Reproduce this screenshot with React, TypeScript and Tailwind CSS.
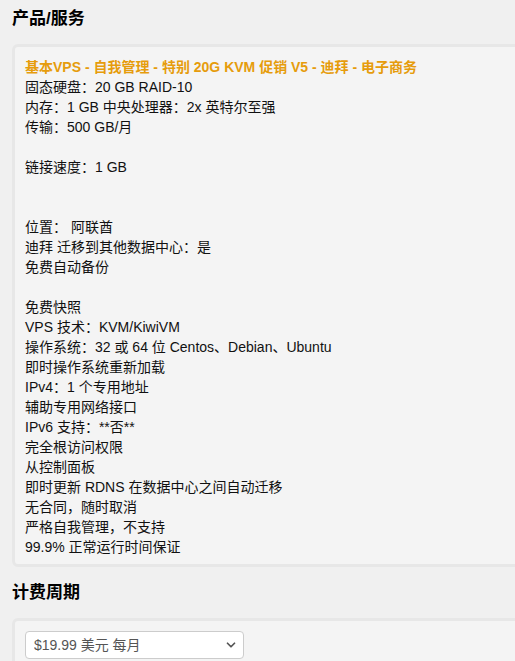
import React from "react";
import { ChevronDown } from "lucide-react";

const features: string[] = [
  "固态硬盘：20 GB RAID-10",
  "内存：1 GB 中央处理器：2x 英特尔至强",
  "传输：500 GB/月",
  "",
  "链接速度：1 GB",
  "",
  "",
  "位置： 阿联酋",
  "迪拜 迁移到其他数据中心：是",
  "免费自动备份",
  "",
  "免费快照",
  "VPS 技术：KVM/KiwiVM",
  "操作系统：32 或 64 位 Centos、Debian、Ubuntu",
  "即时操作系统重新加载",
  "IPv4：1 个专用地址",
  "辅助专用网络接口",
  "IPv6 支持：**否**",
  "完全根访问权限",
  "从控制面板",
  "即时更新 RDNS 在数据中心之间自动迁移",
  "无合同，随时取消",
  "严格自我管理，不支持",
  "99.9% 正常运行时间保证",
];

const App: React.FC = () => {
  return (
    <div
      className="min-h-[661px] w-[515px] overflow-hidden bg-[#f0f0f0] pl-3 text-[14px] text-[#111]"
      style={{ fontFamily: '"Liberation Sans", Arial, "Noto Sans CJK SC", sans-serif' }}
    >
      <h2 className="pt-[7px] text-[17px] font-bold leading-[24px] text-black">产品/服务</h2>

      <div className="-mr-6 mt-[13px] rounded-[6px] border-[3px] border-[#e7e7e7] bg-[#f4f4f4] pb-[7px] pl-[10px] pt-[10px]">
        <div className="font-bold leading-[20px] text-[#e69c0c]">
          基本VPS - 自我管理 - 特别 20G KVM 促销 V5 - 迪拜 - 电子商务
        </div>
        {features.map((line, i) => (
          <div key={i} className="h-[20px] leading-[20px]">
            {line}
          </div>
        ))}
      </div>

      <h2 className="mt-[14px] text-[17px] font-bold leading-[24px] text-black">计费周期</h2>

      <div className="-mr-6 mt-[13px] rounded-[6px] border-[3px] border-[#e7e7e7] bg-[#f4f4f4] pb-4 pl-[10px] pt-[10px]">
        <div className="relative w-[219px]">
          <select
            defaultValue="m"
            className="h-[28px] w-full appearance-none rounded-[4px] border border-[#cccccc] bg-white pl-2 text-[14px] text-[#555]"
          >
            <option value="m">$19.99 美元 每月</option>
          </select>
          <ChevronDown
            size={14}
            strokeWidth={3}
            className="pointer-events-none absolute right-[6px] top-[7px] text-[#555]"
          />
        </div>
      </div>
    </div>
  );
};

export default App;
